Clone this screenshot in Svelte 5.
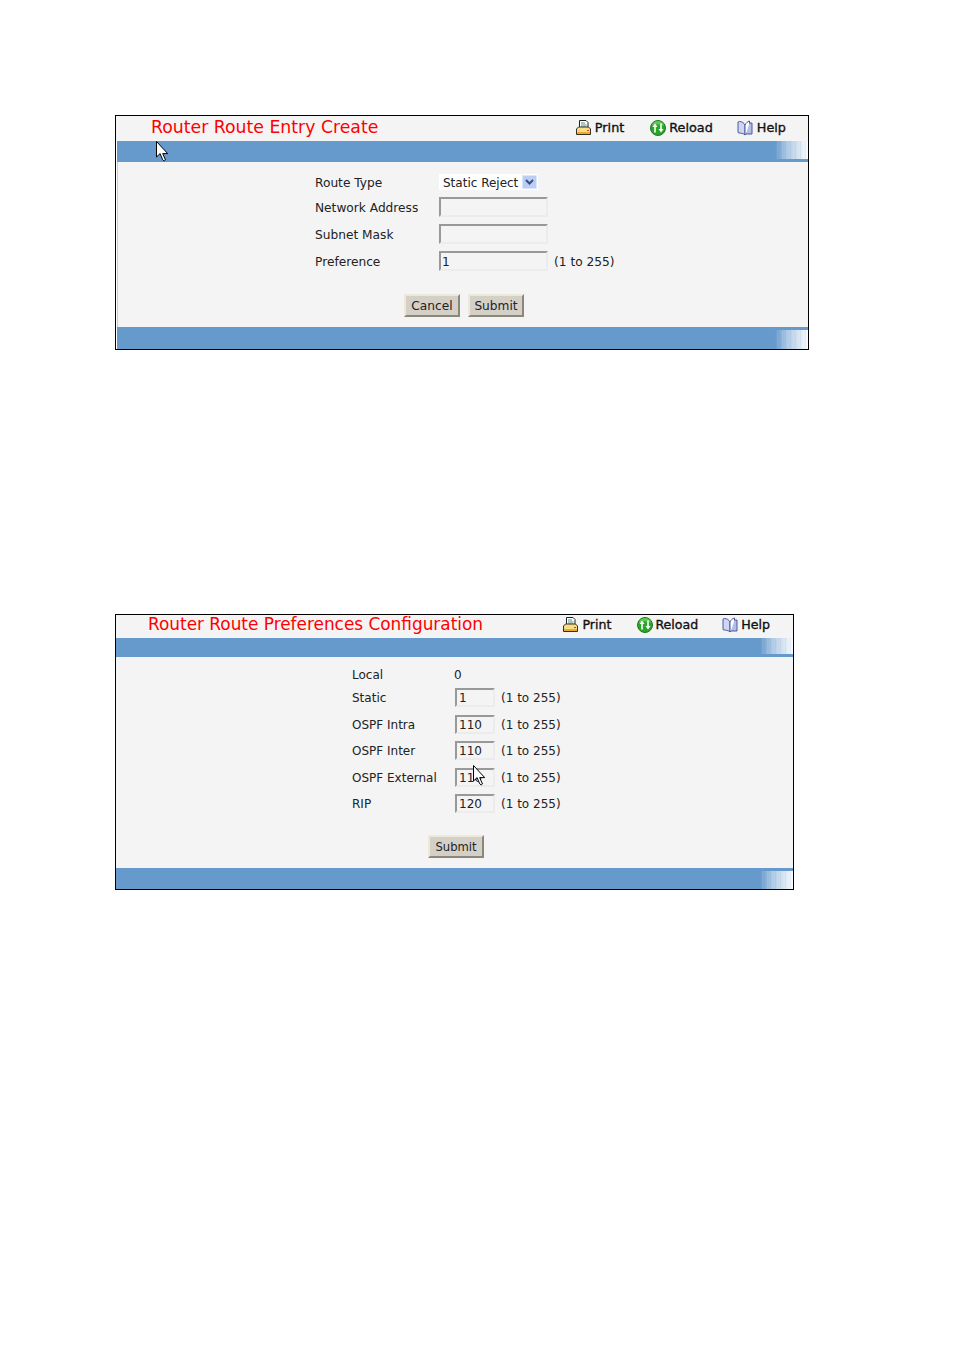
<script>
  const preferences = [
    { label: 'Static', value: '1' },
    { label: 'OSPF Intra', value: '110' },
    { label: 'OSPF Inter', value: '110' },
    { label: 'OSPF External', value: '110' },
    { label: 'RIP', value: '120' }
  ];
</script>

{#snippet toolbar()}
  <div class="tools">
    <span class="tool tool-print">
      <svg width="17" height="17" viewBox="0 0 17 17">
        <path d="M4.500 1.500h6.500l2 2v7h-8.500z" fill="#fff" stroke="#222" />
        <path d="M6 4h4M6 6h5.500M6 8h5.500" stroke="#4f8f96" />
        <path d="M1.500 10l2-2h10l2 2v5.500h-14z" fill="#f7de86" stroke="#33301f" />
        <path d="M2 13h13v2H2z" fill="#eda92a" />
        <path d="M12 11h2v1h-2z" fill="#d33" />
      </svg>
      Print
    </span>
    <span class="tool tool-reload">
      <svg width="16" height="16" viewBox="0 0 16 16">
        <circle cx="8" cy="8" r="7.500" fill="#2aa52a" stroke="#1b7a24" />
        <path d="M2 6a6 5 0 0 1 12 0c-3-2-9-2-12 0z" fill="#74d862" opacity="0.7" />
        <path d="M5 12.500V6" fill="none" stroke="#fff" stroke-width="1.600" />
        <path d="M2.500 7L5 3.500 7.500 7z" fill="#fff" />
        <path d="M11 3.500V10" fill="none" stroke="#fff" stroke-width="1.600" />
        <path d="M8.500 9l2.500 3.500L13.500 9z" fill="#fff" />
      </svg>
      Reload
    </span>
    <span class="tool tool-help">
      <svg width="16" height="16" viewBox="0 0 16 16">
        <path d="M1 2l1.500-.5C5 1.500 7 3 8 5v10c-1.500-1.500-4-2-6-2l-1-.5z" fill="#cfd6f2" stroke="#4b5aa0" />
        <path d="M8 5c1-2 2.500-3.500 4.500-4v10.500c-2 .5-3.500 2-4.500 3.500z" fill="#fff" stroke="#4b5aa0" />
        <path d="M12.500 3h2.500v11H9" fill="#b4bde6" stroke="#4b5aa0" />
      </svg>
      Help
    </span>
  </div>
{/snippet}

{#snippet cursor()}
  <svg class="cursor-icon" width="13" height="21" viewBox="0 0 13 21">
    <path d="M.5.5v15.500l3.600-3.400 2.600 6.200 1.500 1.200 1.300-1-2.800-6.400h5z" fill="#fff" stroke="#000" />
  </svg>
{/snippet}

<main class="page">
  <section class="panel entry">
    <header class="head">
      <h1>Router Route Entry Create</h1>
      {@render toolbar()}
    </header>
    <div class="bar bar-top"></div>
    <div class="cursor cursor-entry">{@render cursor()}</div>

    <form class="form">
      <div class="row row-select">
        <span class="label">Route Type</span>
        <span class="select">Static Reject<i class="arrow">
          <svg width="9" height="6" viewBox="0 0 9 6"><path d="M1 1l3.500 3.500L8 1" fill="none" stroke="#3e4f78" stroke-width="2" /></svg>
        </i></span>
      </div>
      <div class="row">
        <span class="label">Network Address</span>
        <span class="input"></span>
      </div>
      <div class="row">
        <span class="label">Subnet Mask</span>
        <span class="input"></span>
      </div>
      <div class="row">
        <span class="label">Preference</span>
        <span class="input">1</span>
        <span class="hint">(1 to 255)</span>
      </div>
      <div class="actions">
        <button type="button">Cancel</button>
        <button type="button">Submit</button>
      </div>
    </form>

    <div class="bar bar-bottom"></div>
  </section>

  <section class="panel prefs">
    <header class="head">
      <h1>Router Route Preferences Configuration</h1>
      {@render toolbar()}
    </header>
    <div class="bar bar-top"></div>

    <form class="form">
      <div class="row row-local">
        <span class="label">Local</span>
        <span class="value">0</span>
      </div>
      {#each preferences as item}
        <div class="row">
          <span class="label">{item.label}</span>
          <span class="input">{item.value}</span>
          <span class="hint">(1 to 255)</span>
        </div>
      {/each}
      <div class="actions">
        <button type="button">Submit</button>
      </div>
    </form>

    <div class="bar bar-bottom"></div>
    <div class="cursor cursor-prefs">{@render cursor()}</div>
  </section>
</main>

<style>
  :global(body) {
    margin: 0;
    background: #fff;
  }

  .page {
    height: 1350px;
    padding: 115px 0 0 115px;
    box-sizing: border-box;
    font-family: "DejaVu Sans", Verdana, sans-serif;
    font-size: 12px;
    color: #222;
  }

  .panel {
    position: relative;
    display: flex;
    flex-direction: column;
    box-sizing: border-box;
    border: 1px solid #000;
    background: #f4f4f4;
  }

  .entry {
    width: 694px;
    height: 235px;
    margin-bottom: 264px;
    background: #fff;
    font-size: 12.200px;
  }

  .prefs {
    width: 679px;
    height: 276px;
  }

  .head {
    display: flex;
    justify-content: space-between;
    align-items: center;
    height: 25px;
    background: #f4f4f4;
  }

  .prefs .head {
    height: 23px;
  }

  h1 {
    margin: 0;
    padding: 0 0 3px 35px;
    font-size: 17.300px;
    font-weight: 400;
    color: #f00;
    white-space: nowrap;
  }

  .prefs h1 {
    padding: 0 0 5px 32px;
    font-size: 16.900px;
  }

  .tools {
    display: flex;
    align-items: center;
    padding: 0 22px 2px 0;
    color: #111;
    font-size: 12.800px;
    -webkit-text-stroke: 0.350px #111;
  }

  .prefs .tools {
    padding: 0 23px 4px 0;
    font-size: 12.600px;
  }

  .tool {
    display: flex;
    align-items: center;
    gap: 3px;
  }

  .tool-print {
    margin-right: 26px;
  }

  .tool-reload {
    margin-right: 24px;
  }

  .tool-help {
    gap: 4px;
  }

  .prefs .tool-reload {
    gap: 2px;
  }

  .prefs .tool-help {
    gap: 3px;
  }

  .bar {
    box-sizing: border-box;
    flex: none;
    margin-left: 1px;
    background-color: #6699cc;
    background-image:
      repeating-linear-gradient(90deg, rgba(102, 153, 204, 0.1) 0 1px, transparent 1px 2px, rgba(255, 255, 255, 0.08) 2px 3px, transparent 3px 5px),
      linear-gradient(90deg, rgba(255, 255, 255, 0), rgba(255, 255, 255, 0.45) 35%, rgba(255, 255, 255, 0.96) 100%);
    background-repeat: no-repeat;
    background-size: 33px 100%;
    background-position: right top;
  }

  .prefs .bar {
    margin-left: 0;
  }

  .bar-top {
    height: 21px;
    border-bottom: 3px solid #6699cc;
  }

  .prefs .bar-top {
    height: 19px;
  }

  .bar-bottom {
    height: 22px;
    border-top: 3px solid #6699cc;
  }

  .prefs .bar-bottom {
    height: 21px;
  }

  .form {
    flex: 1;
    margin-left: 1px;
    padding: 12px 0 0 197px;
    border-left: 1px solid #ccc;
    background: #f4f4f4;
  }

  .row {
    display: grid;
    grid-template-columns: 124px 110px auto;
    align-items: center;
    height: 20px;
    margin-bottom: 7px;
    white-space: nowrap;
  }

  .label,
  .hint,
  .value {
    padding-top: 2px;
  }

  .row-select {
    height: 16px;
    margin-bottom: 7px;
  }

  .select {
    display: flex;
    align-items: center;
    justify-content: space-between;
    box-sizing: border-box;
    width: 99px;
    height: 16px;
    padding: 1px 1px 0 4px;
    background: #fff;
    font-size: 12px;
  }

  .arrow {
    display: flex;
    align-items: center;
    justify-content: center;
    width: 15px;
    height: 14px;
    margin-top: -1px;
    background: #b9cdf5;
    border: 1px solid #dbe5fb;
    box-sizing: border-box;
  }

  .input {
    box-sizing: border-box;
    width: 109px;
    height: 20px;
    padding-left: 1px;
    border: 2px solid #ececec;
    border-top-color: #999;
    border-left-color: #999;
    line-height: 18px;
  }

  .hint {
    padding-left: 5px;
  }

  .actions {
    display: flex;
    gap: 8px;
    padding: 16px 0 0 89px;
  }

  button {
    box-sizing: border-box;
    width: 56px;
    height: 23px;
    padding: 0;
    border: 2px solid;
    border-color: #ece9d8 #8a8878 #8a8878 #ece9d8;
    background: #d4d0c8;
    font: inherit;
    color: #222;
  }

  .prefs .form {
    margin-left: 0;
    padding: 11.400px 0 0 236px;
    border-left: 0;
  }

  .prefs .row {
    grid-template-columns: 102px 41px auto;
    height: 19px;
    margin-bottom: 7.500px;
  }

  .prefs .label,
  .prefs .hint {
    padding-top: 1px;
  }

  .prefs .row-local {
    height: 14px;
    margin-bottom: 6px;
  }

  .prefs .row-local .label,
  .prefs .row-local .value {
    padding: 0 0 2px;
  }

  .prefs .input {
    width: 40px;
    height: 19px;
    margin-left: 1px;
    padding-left: 2px;
    line-height: 17px;
  }

  .prefs .hint {
    padding-left: 6px;
  }

  .prefs .actions {
    padding: 14.100px 0 0 76px;
  }

  .prefs button {
    padding-top: 1px;
    font-size: 11.600px;
  }

  .cursor {
    position: absolute;
    line-height: 0;
  }

  .cursor-entry {
    left: 40px;
    top: 25px;
  }

  .cursor-prefs {
    left: 357px;
    top: 150px;
  }
</style>
